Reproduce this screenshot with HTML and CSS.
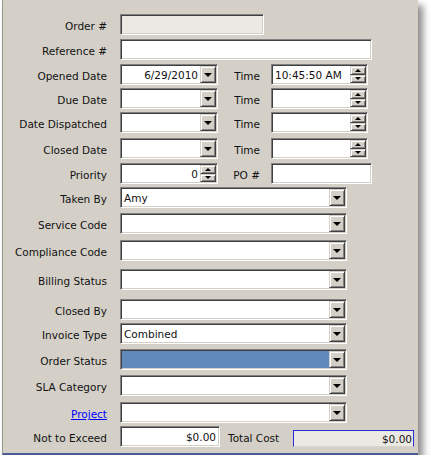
FILE: index.html
```html
<!DOCTYPE html>
<html>
<head>
<meta charset="utf-8">
<link rel="stylesheet" href="styles.css">
</head>
<body>
<div class="window">
  <div class="row">
    <span class="lbl">Order #</span>
    <div class="field disabled w144"></div>
  </div>
  <div class="row mt4">
    <span class="lbl">Reference #</span>
    <div class="field w252"></div>
  </div>
  <div class="row mt4">
    <span class="lbl">Opened Date</span>
    <div class="field w98 right"><span class="val">6/29/2010</span><span class="btn drop"><i class="down"></i></span></div>
    <span class="lbl2">Time</span>
    <div class="field w97"><span class="val">10:45:50 AM</span><span class="spin"><span class="half"><i class="up-s"></i></span><span class="half"><i class="down-s"></i></span></span></div>
  </div>
  <div class="row mt3">
    <span class="lbl">Due Date</span>
    <div class="field w98"><span class="val"></span><span class="btn drop"><i class="down"></i></span></div>
    <span class="lbl2">Time</span>
    <div class="field w97"><span class="val"></span><span class="spin"><span class="half"><i class="up-s"></i></span><span class="half"><i class="down-s"></i></span></span></div>
  </div>
  <div class="row mt3">
    <span class="lbl">Date Dispatched</span>
    <div class="field w98"><span class="val"></span><span class="btn drop"><i class="down"></i></span></div>
    <span class="lbl2">Time</span>
    <div class="field w97"><span class="val"></span><span class="spin"><span class="half"><i class="up-s"></i></span><span class="half"><i class="down-s"></i></span></span></div>
  </div>
  <div class="row mt5">
    <span class="lbl">Closed Date</span>
    <div class="field w98"><span class="val"></span><span class="btn drop"><i class="down"></i></span></div>
    <span class="lbl2">Time</span>
    <div class="field w97"><span class="val"></span><span class="spin"><span class="half"><i class="up-s"></i></span><span class="half"><i class="down-s"></i></span></span></div>
  </div>
  <div class="row mt4">
    <span class="lbl">Priority</span>
    <div class="field w98 right"><span class="val">0</span><span class="spin"><span class="half"><i class="up-s"></i></span><span class="half"><i class="down-s"></i></span></span></div>
    <span class="lbl2">PO #</span>
    <div class="field w101"></div>
  </div>
  <div class="row mt3">
    <span class="lbl">Taken By</span>
    <div class="field w227"><span class="val">Amy</span><span class="btn drop"><i class="down"></i></span></div>
  </div>
  <div class="row mt5">
    <span class="lbl">Service Code</span>
    <div class="field w227"><span class="val"></span><span class="btn drop"><i class="down"></i></span></div>
  </div>
  <div class="row mt6">
    <span class="lbl">Compliance Code</span>
    <div class="field w227"><span class="val"></span><span class="btn drop"><i class="down"></i></span></div>
  </div>
  <div class="row mt8">
    <span class="lbl">Billing Status</span>
    <div class="field w227"><span class="val"></span><span class="btn drop"><i class="down"></i></span></div>
  </div>
  <div class="row mt9">
    <span class="lbl">Closed By</span>
    <div class="field w227"><span class="val"></span><span class="btn drop"><i class="down"></i></span></div>
  </div>
  <div class="row mt3">
    <span class="lbl">Invoice Type</span>
    <div class="field w227"><span class="val">Combined</span><span class="btn drop"><i class="down"></i></span></div>
  </div>
  <div class="row mt5">
    <span class="lbl">Order Status</span>
    <div class="field w227 selected"><span class="val"></span><span class="btn drop"><i class="down"></i></span></div>
  </div>
  <div class="row mt5">
    <span class="lbl">SLA Category</span>
    <div class="field w227"><span class="val"></span><span class="btn drop"><i class="down"></i></span></div>
  </div>
  <div class="row mt6">
    <span class="lbl"><a class="link" href="#">Project</a></span>
    <div class="field w227"><span class="val"></span><span class="btn drop"><i class="down"></i></span></div>
  </div>
  <div class="row mt3">
    <span class="lbl">Not to Exceed</span>
    <div class="field w100 right"><span class="val">$0.00</span></div>
    <span class="lbl3">Total Cost</span>
    <div class="total"><span class="val">$0.00</span></div>
  </div>
</div>
</body>
</html>
```

FILE: styles.css
```css
html, body {
  margin: 0;
  padding: 0;
  background: #ffffff;
}
body {
  font-family: "DejaVu Sans", "Liberation Sans", sans-serif;
  font-size: 10.5px;
  color: #111;
}
.window {
  margin-left: 2px;
  width: 416px;
  height: 455px;
  box-sizing: border-box;
  background: #d4d0c8;
  border-left: 1px solid #9a978f;
  border-bottom: 2px solid #4a5d95;
  box-shadow: 5px 5px 7px rgba(0, 0, 0, 0.45);
  padding-top: 14px;
}
.row {
  display: flex;
  align-items: center;
  height: 21px;
}
.mt3 { margin-top: 3px; }
.mt4 { margin-top: 4px; }
.mt5 { margin-top: 5px; }
.mt6 { margin-top: 6px; }
.mt8 { margin-top: 8px; }
.mt9 { margin-top: 9px; }
.lbl {
  width: 104px;
  margin-right: 13px;
  text-align: right;
  white-space: nowrap;
  padding-top: 3px;
}
.lbl2 {
  width: 42px;
  margin-right: 11px;
  text-align: right;
  white-space: nowrap;
  padding-top: 2px;
}
.lbl3 {
  margin-left: 8px;
  width: 65px;
  white-space: nowrap;
  padding-top: 2px;
}
.link {
  color: #0000ff;
  text-decoration: underline;
}
.field {
  box-sizing: border-box;
  height: 21px;
  display: flex;
  align-items: stretch;
  background: #fff;
  border-top: 1px solid #808080;
  border-left: 1px solid #808080;
  border-right: 1px solid #ffffff;
  border-bottom: 1px solid #ffffff;
  box-shadow: inset 1px 1px 0 #404040, inset -1px -1px 0 #d4d0c8;
  padding: 1px;
}
.field.disabled {
  background: #ebe9e3;
}
.field.selected {
  background: #6289bb;
}
.w98 { width: 98px; }
.w97 { width: 97px; }
.w100 { width: 100px; }
.w101 { width: 101px; }
.w144 { width: 144px; }
.w227 { width: 227px; }
.w252 { width: 252px; }
.val {
  flex: 1;
  display: flex;
  align-items: center;
  padding-left: 2px;
  padding-right: 2px;
  white-space: nowrap;
  overflow: hidden;
  padding-top: 1px;
}
.right .val {
  justify-content: flex-end;
}
.btn {
  width: 16px;
  box-sizing: border-box;
  background: #d4d0c8;
  border-top: 1px solid #d4d0c8;
  border-left: 1px solid #d4d0c8;
  border-right: 1px solid #404040;
  border-bottom: 1px solid #404040;
  box-shadow: inset 1px 1px 0 #ffffff, inset -1px -1px 0 #808080;
  display: flex;
  align-items: center;
  justify-content: center;
}
.down {
  display: block;
  width: 0;
  height: 0;
  border-left: 4px solid transparent;
  border-right: 4px solid transparent;
  border-top: 4px solid #000;
  margin-top: 1px;
}
.spin {
  width: 16px;
  display: flex;
  flex-direction: column;
}
.half {
  flex: 1;
  box-sizing: border-box;
  background: #d4d0c8;
  border-top: 1px solid #d4d0c8;
  border-left: 1px solid #d4d0c8;
  border-right: 1px solid #404040;
  border-bottom: 1px solid #404040;
  box-shadow: inset 1px 1px 0 #ffffff, inset -1px -1px 0 #808080;
  display: flex;
  align-items: center;
  justify-content: center;
}
.up-s {
  display: block;
  width: 0;
  height: 0;
  border-left: 3px solid transparent;
  border-right: 3px solid transparent;
  border-bottom: 3px solid #000;
}
.down-s {
  display: block;
  width: 0;
  height: 0;
  border-left: 3px solid transparent;
  border-right: 3px solid transparent;
  border-top: 3px solid #000;
}
.total {
  box-sizing: border-box;
  width: 121px;
  height: 17px;
  margin-top: 4px;
  display: flex;
  background: #ebe9e3;
  border: 1px solid #2b2bd8;
  border-bottom-color: #d8d6d0;
}
.total .val {
  justify-content: flex-end;
  padding-right: 1px;
  padding-top: 0;
}
```
